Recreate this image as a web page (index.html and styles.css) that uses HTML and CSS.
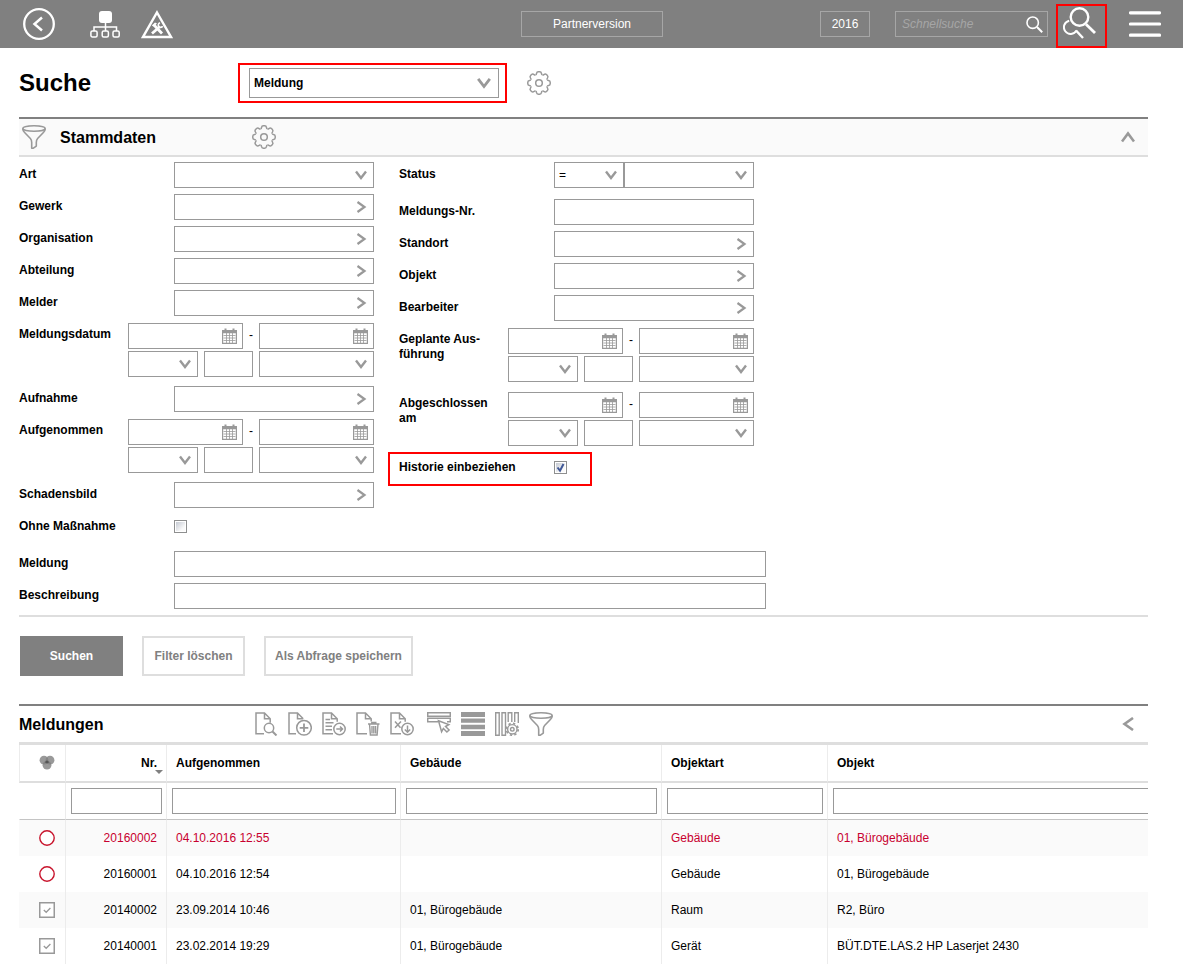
FILE: index.html
```html
<!DOCTYPE html>
<html lang="de">
<head>
<meta charset="utf-8">
<meta name="viewport" content="width=device-width, initial-scale=1">
<title>Suche – Meldung</title>
<link rel="stylesheet" href="styles.css">
</head>
<body>
<svg class="sprite" aria-hidden="true">
  <symbol id="down" viewBox="0 0 12 12"><path d="M1 2.500 6 9l5-6.500" fill="none" stroke="currentColor" stroke-width="2.400"/></symbol>
  <symbol id="right" viewBox="0 0 12 12"><path d="M2.500 1 9.500 6l-7 5" fill="none" stroke="currentColor" stroke-width="2.200"/></symbol>
  <symbol id="up" viewBox="0 0 14 14"><path d="M1 11.500 7 3.500l6 8" fill="none" stroke="currentColor" stroke-width="2.600"/></symbol>
  <symbol id="left" viewBox="0 0 14 14"><path d="M12 1 3.500 7l8.500 6" fill="none" stroke="currentColor" stroke-width="2.600"/></symbol>
  <symbol id="calendar" viewBox="0 0 15 16">
    <path d="M.6 2.500h13.800v12.900H.6z" fill="#fff" stroke="currentColor" stroke-width="1.200"/>
    <path d="M1 2.500h13v2.700H1zM2.500.5h2v3h-2zM10.500.5h2v3h-2z" fill="currentColor"/>
    <path d="M4.500 5v10M7.500 5v10M10.500 5v10M1.500 7.500h12M1.500 10h12M1.500 12.500h12" stroke="currentColor" stroke-width=".8"/>
  </symbol>
  <symbol id="funnel" viewBox="0 0 24 24">
    <g fill="none" stroke="currentColor" stroke-width="1.600" stroke-linejoin="round"><ellipse cx="12" cy="3.500" rx="11.200" ry="2.700"/><path d="M.8 3.700c0 1.600.6 2.600 1.800 3.800l5.800 6c1.100 1.200 1.300 2.200 1.300 4v5.700h1.700l2.900-2.100v-3.600c0-1.800.2-2.800 1.300-4l5.800-6c1.200-1.200 1.800-2.200 1.800-3.800"/></g>
  </symbol>
  <symbol id="gear" viewBox="-12 -12 24 24">
    <g fill="none" stroke="currentColor" stroke-width="1.500" stroke-linejoin="round">
      <circle r="3.300"/>
      <path id="tooth" d="M-3.400-8.300Q-2.600-8.500-2.500-9.400-2.200-11.200-.7-11.200H.7Q2.200-11.200 2.500-9.400 2.600-8.500 3.400-8.300"/>
      <use href="#tooth" transform="rotate(45)"/><use href="#tooth" transform="rotate(90)"/><use href="#tooth" transform="rotate(135)"/><use href="#tooth" transform="rotate(180)"/><use href="#tooth" transform="rotate(225)"/><use href="#tooth" transform="rotate(270)"/><use href="#tooth" transform="rotate(315)"/>
    </g>
  </symbol>
  <symbol id="tick" viewBox="0 0 13 13"><path d="M3.500 6.500 6 9.700 9.500 3" fill="none" stroke="#3f5796" stroke-width="2"/></symbol>
  <symbol id="open" viewBox="0 0 16 16"><circle cx="8" cy="8" r="7.200" fill="#fff" stroke="#c8142c" stroke-width="1.400"/></symbol>
  <symbol id="done" viewBox="0 0 16 16"><path d="M.75.75h14.500v14.500H.75z" fill="#fff" stroke="#999" stroke-width="1.500"/><path d="m4.800 8 2.400 2.300 4.200-4.300" fill="none" stroke="#999" stroke-width="1.300"/></symbol>
</svg>

<header class="topbar">
  <div class="topbar-left">
    <button class="icon-btn" type="button" aria-label="Zurück">
      <svg width="32" height="32" viewBox="0 0 32 32" fill="none" stroke="#fff"><circle cx="16" cy="16" r="14.800" stroke-width="2.300"/><path d="m19 9.500-7.500 6.500 7.500 6.500" stroke-width="2.500"/></svg>
    </button>
    <button class="icon-btn tree-btn" type="button" aria-label="Struktur">
      <svg width="30" height="28" viewBox="0 0 30 28"><rect x="9" y="1" width="13" height="12" rx="3" fill="#fff"/><g fill="none" stroke="#fff" stroke-width="1.500"><path d="M15.500 13v8M4 21v-4h22.500v4"/><rect x=".9" y="21" width="6.200" height="6" rx="1.500"/><rect x="12.200" y="21" width="6.200" height="6" rx="1.500"/><rect x="23" y="21" width="6.200" height="6" rx="1.500"/></g></svg>
    </button>
    <button class="icon-btn" type="button" aria-label="Störungen">
      <svg width="32" height="29" viewBox="0 0 32 29"><path d="M16 2.500 30 27H2z" fill="none" stroke="#fff" stroke-width="2.400"/><path d="m13 15 8 8.500M19 16.500l-8 7" stroke="#fff" stroke-width="2.800"/><path d="m10.800 15.500 3.200-3 2 1-2 2-1.500 1z" fill="#fff"/><path d="M19 12.700a2.400 2.400 0 1 0 2.700 3.600" fill="none" stroke="#fff" stroke-width="1.600"/></svg>
    </button>
  </div>
  <button class="bar-box partner" type="button">Partnerversion</button>
  <div class="topbar-right">
    <button class="bar-box year" type="button">2016</button>
    <div class="quick">
      <input type="search" placeholder="Schnellsuche" aria-label="Schnellsuche">
      <svg width="17" height="17" viewBox="0 0 17 17" fill="none" stroke="#fff"><circle cx="6.700" cy="6.700" r="5.700" stroke-width="1.600"/><path d="m11 11 5.200 5.200" stroke-width="2"/></svg>
    </div>
    <button class="icon-btn marked-btn" type="button" aria-label="Suche">
      <svg width="33" height="33" viewBox="0 0 33 33" fill="none" stroke="#fff"><circle cx="16.500" cy="10" r="8.800" stroke-width="2.400"/><path d="m23 17.300 9 8.700" stroke-width="2.800"/><path d="M6.200 13.700A6.700 6.700 0 1 0 13.500 23.500" stroke-width="2"/><path d="m13 23.500 7 7.500" stroke-width="2.400"/></svg>
    </button>
    <button class="icon-btn menu-btn" type="button" aria-label="Menü">
      <svg width="32" height="26" viewBox="0 0 32 26"><path d="M1.500 1.800h29M1.500 13h29M1.500 24.200h29" stroke="#fff" stroke-width="3.200" stroke-linecap="round"/></svg>
    </button>
  </div>
</header>

<main class="page">
  <div class="title-row">
    <h1>Suche</h1>
    <div class="marked-type">
      <div class="field type-select"><select aria-label="Suchtyp"><option>Meldung</option></select><svg class="ico-14"><use href="#down"/></svg></div>
    </div>
    <button class="icon-btn grey" type="button" aria-label="Einstellungen"><svg class="ico-24"><use href="#gear"/></svg></button>
  </div>

  <section>
    <div class="section-head shaded">
      <div class="section-title"><svg class="ico-24 grey"><use href="#funnel"/></svg><h2>Stammdaten</h2></div>
      <button class="icon-btn grey" type="button" aria-label="Felder anpassen"><svg class="ico-24"><use href="#gear"/></svg></button>
      <button class="icon-btn grey collapse" type="button" aria-label="Einklappen"><svg class="ico-14"><use href="#up"/></svg></button>
    </div>

    <form class="form">
      <div class="columns">
        <div class="column">
          <div class="row"><label for="art">Art</label><div class="field"><select id="art"><option></option></select><svg><use href="#down"/></svg></div></div>
          <div class="row"><label for="gewerk">Gewerk</label><div class="field"><input id="gewerk" type="text"><svg><use href="#right"/></svg></div></div>
          <div class="row"><label for="org">Organisation</label><div class="field"><input id="org" type="text"><svg><use href="#right"/></svg></div></div>
          <div class="row"><label for="abt">Abteilung</label><div class="field"><input id="abt" type="text"><svg><use href="#right"/></svg></div></div>
          <div class="row"><label for="melder">Melder</label><div class="field"><input id="melder" type="text"><svg><use href="#right"/></svg></div></div>
          <div class="row"><label for="mdatum">Meldungsdatum</label>
            <div class="dates">
              <div class="range"><div class="field"><input id="mdatum" type="text"><svg class="cal"><use href="#calendar"/></svg></div><span>-</span><div class="field"><input type="text" aria-label="Meldungsdatum bis"><svg class="cal"><use href="#calendar"/></svg></div></div>
              <div class="period"><div class="field"><select aria-label="Operator"><option></option></select><svg><use href="#down"/></svg></div><div class="field"><input type="text" aria-label="Anzahl"></div><div class="field"><select aria-label="Zeitraum"><option></option></select><svg><use href="#down"/></svg></div></div>
            </div>
          </div>
          <div class="row"><label for="aufnahme">Aufnahme</label><div class="field"><input id="aufnahme" type="text"><svg><use href="#right"/></svg></div></div>
          <div class="row"><label for="aufgen">Aufgenommen</label>
            <div class="dates">
              <div class="range"><div class="field"><input id="aufgen" type="text"><svg class="cal"><use href="#calendar"/></svg></div><span>-</span><div class="field"><input type="text" aria-label="Aufgenommen bis"><svg class="cal"><use href="#calendar"/></svg></div></div>
              <div class="period"><div class="field"><select aria-label="Operator"><option></option></select><svg><use href="#down"/></svg></div><div class="field"><input type="text" aria-label="Anzahl"></div><div class="field"><select aria-label="Zeitraum"><option></option></select><svg><use href="#down"/></svg></div></div>
            </div>
          </div>
          <div class="row"><label for="schaden">Schadensbild</label><div class="field"><input id="schaden" type="text"><svg><use href="#right"/></svg></div></div>
          <div class="row"><label for="ohne">Ohne Maßnahme</label><div class="check"><input id="ohne" type="checkbox"></div></div>
        </div>

        <div class="column">
          <div class="row status-row"><label for="status">Status</label><div class="pair"><div class="field"><select aria-label="Vergleich"><option>=</option></select><svg><use href="#down"/></svg></div><div class="field"><select id="status"><option></option></select><svg><use href="#down"/></svg></div></div></div>
          <div class="row"><label for="mnr">Meldungs-Nr.</label><div class="field"><input id="mnr" type="text"></div></div>
          <div class="row"><label for="standort">Standort</label><div class="field"><input id="standort" type="text"><svg><use href="#right"/></svg></div></div>
          <div class="row"><label for="objekt">Objekt</label><div class="field"><input id="objekt" type="text"><svg><use href="#right"/></svg></div></div>
          <div class="row"><label for="bearb">Bearbeiter</label><div class="field"><input id="bearb" type="text"><svg><use href="#right"/></svg></div></div>
          <div class="row"><label for="geplant">Geplante Aus-<br>führung</label>
            <div class="dates">
              <div class="range"><div class="field"><input id="geplant" type="text"><svg class="cal"><use href="#calendar"/></svg></div><span>-</span><div class="field"><input type="text" aria-label="Geplante Ausführung bis"><svg class="cal"><use href="#calendar"/></svg></div></div>
              <div class="period"><div class="field"><select aria-label="Operator"><option></option></select><svg><use href="#down"/></svg></div><div class="field"><input type="text" aria-label="Anzahl"></div><div class="field"><select aria-label="Zeitraum"><option></option></select><svg><use href="#down"/></svg></div></div>
            </div>
          </div>
          <div class="row"><label for="abgeschl">Abgeschlossen am</label>
            <div class="dates">
              <div class="range"><div class="field"><input id="abgeschl" type="text"><svg class="cal"><use href="#calendar"/></svg></div><span>-</span><div class="field"><input type="text" aria-label="Abgeschlossen bis"><svg class="cal"><use href="#calendar"/></svg></div></div>
              <div class="period"><div class="field"><select aria-label="Operator"><option></option></select><svg><use href="#down"/></svg></div><div class="field"><input type="text" aria-label="Anzahl"></div><div class="field"><select aria-label="Zeitraum"><option></option></select><svg><use href="#down"/></svg></div></div>
            </div>
          </div>
          <div class="row marked-row"><label for="historie">Historie einbeziehen</label><div class="check"><input id="historie" type="checkbox" checked><svg><use href="#tick"/></svg></div></div>
        </div>
      </div>
      <div class="wide">
        <div class="row"><label for="meldung">Meldung</label><div class="field"><input id="meldung" type="text"></div></div>
        <div class="row"><label for="beschr">Beschreibung</label><div class="field"><input id="beschr" type="text"></div></div>
      </div>
    </form>

    <div class="actions">
      <button class="btn primary" type="button">Suchen</button>
      <button class="btn" type="button">Filter löschen</button>
      <button class="btn" type="button">Als Abfrage speichern</button>
    </div>
  </section>

  <section>
    <div class="section-head results-head">
      <div class="section-title"><h2>Meldungen</h2></div>
      <div class="tools">
        <button class="icon-btn" type="button" aria-label="Anzeigen"><svg class="ico-24" viewBox="0 0 24 24" fill="none" stroke="currentColor" stroke-width="1.500"><path d="M10 21.700H2V1h8.500l5.700 5.800v4M10.500 1v5.800h5.700"/><circle cx="15" cy="16" r="4.700"/><path d="m18.500 19.500 4 4" stroke-width="2"/></svg></button>
        <button class="icon-btn" type="button" aria-label="Neu"><svg class="ico-24" viewBox="0 0 24 24" fill="none" stroke="currentColor" stroke-width="1.500"><path d="M8 21.700H1V1h8.500l5.700 5.800M9.500 1v5.800h5.700"/><circle cx="16" cy="15.800" r="7.300"/><path d="M16 11.500v8.600M11.700 15.800h8.600" stroke-width="1.800"/></svg></button>
        <button class="icon-btn" type="button" aria-label="Weiterleiten"><svg class="ico-24" viewBox="0 0 24 24" fill="none" stroke="currentColor" stroke-width="1.500"><path d="M11 21.700H1V1h8.500l5.700 5.800v3M9.500 1v5.800h5.700M3.500 7.500H8M3.500 10.800h8M3.500 14.200h6.500M3.500 17.700h6.500"/><circle cx="17.500" cy="17" r="5.700"/><path d="M14.300 17h6M18 14.500l2.500 2.500-2.500 2.500"/></svg></button>
        <button class="icon-btn" type="button" aria-label="Löschen"><svg class="ico-24" viewBox="0 0 24 24" fill="none" stroke="currentColor" stroke-width="1.500"><path d="M11 21.700H1V1h8.500l5.700 5.800v2.700M9.500 1v5.800h5.700"/><path d="M12 12h11.500M15.800 12v-1.500h4V12M13.500 12l.9 11h6.700l.9-11M16 14v7.500M17.800 14v7.500M19.600 14v7.500" stroke-width="1.400"/></svg></button>
        <button class="icon-btn" type="button" aria-label="Exportieren"><svg class="ico-24" viewBox="0 0 24 24" fill="none" stroke="currentColor" stroke-width="1.500"><path d="M11 21.700H1V1h8.500l5.700 5.800v3M9.500 1v5.800h5.700M5 9.500l5.500 6.300M11 9.500l-6 6.300"/><circle cx="17.500" cy="17" r="5.700"/><path d="M17.500 13.500v6.300M14.800 17.500l2.700 2.700 2.700-2.700"/></svg></button>
        <button class="icon-btn group-start" type="button" aria-label="Auswählen"><svg class="ico-24" viewBox="0 0 24 24" fill="none" stroke="currentColor" stroke-width="1.500"><path d="M.7.8h22.600v3.400H.7zM11 9.700H.7V6.300h22.600v3.400H20"/><path d="m11.500 8.800 10.300 3.800-3.300 1.900 3.600 3.500-2.200 2-3.500-3.600-1.800 3.300z" fill="#fff"/></svg></button>
        <button class="icon-btn" type="button" aria-label="Zeilen"><svg class="ico-24" viewBox="0 0 24 24" fill="currentColor"><path d="M0 0h24v5H0zM0 6.500h24v4.300H0zM0 12.700h24v4.500H0zM0 19h24v5H0z"/></svg></button>
        <button class="icon-btn" type="button" aria-label="Spalten"><svg class="ico-24" viewBox="0 0 24 24" fill="none" stroke="currentColor" stroke-width="1.400"><path d="M.7.7h3.500v22.600H.7zM7 .7h3.500v22.600H7zM13.200 10V.7h3.600V10M19.700 10V.7h3.600V11"/><circle cx="17.300" cy="17.300" r="4.700" fill="#fff"/><circle cx="17.300" cy="17.300" r="1.800"/><circle cx="17.300" cy="17.300" r="5.900" stroke-width="1.700" stroke-dasharray="2.300 2.330"/></svg></button>
        <button class="icon-btn" type="button" aria-label="Filtern"><svg class="ico-24"><use href="#funnel"/></svg></button>
      </div>
      <button class="icon-btn grey collapse" type="button" aria-label="Ausklappen"><svg class="ico-14"><use href="#left"/></svg></button>
    </div>

    <table class="grid">
      <colgroup><col class="c-state"><col class="c-nr"><col class="c-date"><col class="c-building"><col class="c-type"><col></colgroup>
      <thead>
        <tr class="names">
          <th class="state" scope="col" aria-label="Status"><svg width="16" height="16" viewBox="0 0 16 16" fill="#808080"><g fill-opacity=".8"><circle cx="5" cy="5.200" r="4.400"/><circle cx="11" cy="5.200" r="4.400"/><circle cx="8" cy="10.200" r="4.400"/></g><path d="M8 2.500v2.800l2.300 2L8 8.500 5.700 7.300 8 5.300z" fill="#555"/></svg></th>
          <th class="nr" scope="col">Nr.<span class="sort"></span></th>
          <th scope="col">Aufgenommen</th><th scope="col">Gebäude</th><th scope="col">Objektart</th><th scope="col">Objekt</th>
        </tr>
        <tr class="filters">
          <td></td>
          <td><input type="text" aria-label="Filter Nr."></td>
          <td><input type="text" aria-label="Filter Aufgenommen"></td>
          <td><input type="text" aria-label="Filter Gebäude"></td>
          <td><input type="text" aria-label="Filter Objektart"></td>
          <td class="clipped"><input type="text" aria-label="Filter Objekt"></td>
        </tr>
      </thead>
      <tbody>
        <tr class="alert"><td class="state"><svg><use href="#open"/></svg></td><td class="nr">20160002</td><td>04.10.2016 12:55</td><td></td><td>Gebäude</td><td>01, Bürogebäude</td></tr>
        <tr><td class="state"><svg><use href="#open"/></svg></td><td class="nr">20160001</td><td>04.10.2016 12:54</td><td></td><td>Gebäude</td><td>01, Bürogebäude</td></tr>
        <tr><td class="state"><svg><use href="#done"/></svg></td><td class="nr">20140002</td><td>23.09.2014 10:46</td><td>01, Bürogebäude</td><td>Raum</td><td>R2, Büro</td></tr>
        <tr><td class="state"><svg><use href="#done"/></svg></td><td class="nr">20140001</td><td>23.02.2014 19:29</td><td>01, Bürogebäude</td><td>Gerät</td><td>BÜT.DTE.LAS.2 HP Laserjet 2430</td></tr>
      </tbody>
    </table>
  </section>
</main>
</body>
</html>
```
FILE: styles.css
```css
* { box-sizing: border-box; }

body {
  margin: 0;
  background: #fff;
  color: #000;
  font: 12px/15px "Liberation Sans", Arial, sans-serif;
}

h1, h2 { margin: 0; }
h1 { font-size: 24px; line-height: 28px; }
h2 { font-size: 16px; line-height: 20px; }
svg { display: block; }

button, input, select {
  margin: 0;
  padding: 0;
  border: 0;
  border-radius: 0;
  background: transparent;
  color: inherit;
  font: inherit;
  outline: 0;
  appearance: none;
}

.sprite { position: absolute; width: 0; height: 0; }
.ico-24 { width: 24px; height: 24px; }
.ico-14 { width: 14px; height: 14px; }
.icon-btn { display: block; flex: none; }
.grey { color: #999; }

/* Top bar */
.topbar {
  display: grid;
  grid-template-columns: 1fr auto 1fr;
  align-items: center;
  height: 48px;
  padding: 0 22px 2px 23px;
  background: #808080;
  color: #fff;
}
.topbar-left, .topbar-right { display: flex; align-items: center; }
.topbar-right { justify-content: flex-end; }
.tree-btn { margin: 0 21px 0 35px; }
.bar-box { height: 26px; border: 1px solid #a6a6a6; }
.partner { width: 142px; }
.year { width: 50px; margin-right: 25px; }
.quick {
  display: flex;
  align-items: center;
  width: 153px;
  height: 26px;
  margin-right: 8px;
  padding: 0 4px 0 6px;
  border: 1px solid #a6a6a6;
}
.quick input { flex: 1; min-width: 0; }
.quick input::placeholder { color: #a6a6a6; font-style: italic; opacity: 1; }
.marked-btn {
  height: 44px;
  margin: 4px 22px 0 0;
  padding: 0 9px 6px 5px;
  border: 2px solid #f00;
}

/* Page */
.page { padding: 0 35px 0 19px; }
.title-row {
  display: grid;
  grid-template-columns: 219px auto auto;
  justify-content: start;
  align-items: center;
  height: 69px;
}
.marked-type {
  margin-right: 20px;
  padding: 3px 6px 3px 9px;
  border: 2px solid #f00;
}

.section-head {
  display: flex;
  align-items: center;
  height: 40px;
  border-top: 2px solid #808080;
  border-bottom: 2px solid #dedede;
}
.shaded { background: #fafafa; }
.section-title { display: flex; align-items: center; gap: 14px; width: 233px; }
.shaded .section-title { padding-left: 3px; }
.section-title h2 { padding-top: 1px; }
.collapse { margin: 0 13px 0 auto; }
.results-head { height: 41px; border-bottom-width: 3px; }
.tools { display: flex; gap: 10px; padding-left: 2px; color: #999; }
.group-start { margin-left: 3px; }

/* Form */
.form { padding: 5px 0 6px; border-bottom: 2px solid #dedede; }
.columns {
  display: grid;
  grid-template-columns: 355px 355px;
  gap: 25px;
  align-items: start;
}
.column, .wide { display: flex; flex-direction: column; gap: 6px; }
.wide { max-width: 747px; margin-top: 11px; }
.row { display: flex; min-height: 26px; }
.row > label { flex: 1; padding: 5px 10px 0 0; font-weight: bold; }
.row > .field, .row > .check, .pair { width: 200px; }
.wide .row > .field { width: 592px; }
.status-row { margin-bottom: 5px; }

.field {
  display: grid;
  align-items: center;
  height: 26px;
  border: 1px solid #999;
  background: #fff;
  color: #999;
}
.field > * { grid-area: 1 / 1; }
.field input, .field select { width: 100%; height: 24px; padding: 0 20px 0 4px; color: #000; }
.field svg { justify-self: end; width: 12px; height: 12px; margin-right: 6px; pointer-events: none; }
.field .cal { width: 15px; height: 16px; margin-right: 5px; }

.type-select { width: 250px; height: 30px; }
.field.type-select select { height: 28px; padding-top: 2px; font-weight: bold; }
.type-select .ico-14 { width: 14px; height: 14px; margin-right: 7px; }

.pair { display: grid; grid-template-columns: 70px 130px; }
.dates { display: grid; gap: 2px; width: 246px; padding: 1px 0 3px; }
.range { display: grid; grid-template-columns: 115px 16px 115px; text-align: center; }
.range span { padding-top: 5px; }
.period { display: grid; grid-template-columns: 70px 49px 115px; gap: 6px; }

.check { display: grid; grid-template-columns: 13px; align-content: start; padding-top: 6px; }
.check > * { grid-area: 1 / 1; width: 13px; height: 13px; }
.check svg { pointer-events: none; }
.check input {
  border: 1px solid #8e8f8f;
  background: linear-gradient(135deg, #c4c9d2, #fafafa 75%) content-box;
  padding: 1px;
}

.marked-row { position: relative; }
.marked-row::after {
  content: "";
  position: absolute;
  inset: -3px 162px -5px -11px;
  border: 2px solid #f00;
  pointer-events: none;
}

.actions { display: flex; gap: 19px; padding: 19px 0 28px 1px; }
.btn {
  min-width: 103px;
  height: 40px;
  padding: 0 9px;
  border: 2px solid #dedede;
  color: #808080;
  font-weight: bold;
}
.btn.primary { border-color: #808080; background: #808080; color: #fff; }

/* Result table */
.grid { width: 100%; table-layout: fixed; border-collapse: separate; border-spacing: 0; }
.c-state { width: 46px; }
.c-nr { width: 101px; }
.c-date { width: 234px; }
.c-building { width: 261px; }
.c-type { width: 166px; }
.grid th, .grid td {
  height: 36px;
  padding: 0 9px;
  border-left: 1px solid #ececec;
  text-align: left;
  white-space: nowrap;
}
.grid td:first-child { border-left-color: transparent; }
.names th { height: 38px; border-bottom: 2px solid #dedede; }
.grid .filters td { height: 37px; padding: 0 4px 0 5px; border-bottom: 1px solid #c4c4c4; }
.filters input { display: block; width: 100%; height: 26px; padding: 0 4px; border: 1px solid #999; background: #fff; }
.filters .clipped { overflow: hidden; }
.clipped input { width: calc(100% + 20px); }
.grid .nr { position: relative; text-align: right; }
.grid .state { padding: 0 0 0 19px; }
.state svg { width: 16px; height: 16px; }
.sort {
  position: absolute;
  right: 3px;
  bottom: 7px;
  border: 4px solid transparent;
  border-top-color: #808080;
  border-bottom: 0;
}
tbody tr:nth-child(odd) { background: #fafafa; }
.alert { color: #c8002f; }
```
